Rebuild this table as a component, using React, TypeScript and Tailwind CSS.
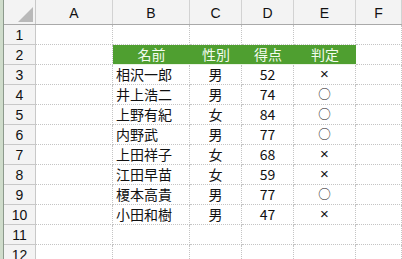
const COLS = ["A", "B", "C", "D", "E", "F"];

type Row = { n: number; cells?: [string, string, string, string]; head?: boolean };

const ROWS: Row[] = [
  { n: 1 },
  { n: 2, cells: ["名前", "性別", "得点", "判定"], head: true },
  { n: 3, cells: ["相沢一郎", "男", "52", "×"] },
  { n: 4, cells: ["井上浩二", "男", "74", "○"] },
  { n: 5, cells: ["上野有紀", "女", "84", "○"] },
  { n: 6, cells: ["内野武", "男", "77", "○"] },
  { n: 7, cells: ["上田祥子", "女", "68", "×"] },
  { n: 8, cells: ["江田早苗", "女", "59", "×"] },
  { n: 9, cells: ["榎本高貴", "男", "77", "○"] },
  { n: 10, cells: ["小田和樹", "男", "47", "×"] },
  { n: 11 },
  { n: 12 },
];

const grid = "grid grid-cols-[32px_77px_77px_52px_52px_62px_1fr]";
const cell = "h-[20px] border-r border-b border-dotted border-[#c4c4c4] flex items-center";

export default function App() {
  return (
    <div
      className="flex h-[259px] w-[402px] overflow-hidden bg-white text-[#111]"
      style={{ fontFamily: '"Noto Sans CJK JP", "Noto Sans", sans-serif' }}
    >
      {/* window edge */}
      <div className="w-[4px] shrink-0 border-r border-[#8c9a8c] bg-[#cfdccb]" />

      <div className="flex-1">
        {/* column headers */}
        <div className={`${grid} h-[25px] border-b border-[#a9a9a9] bg-[#f3f3f3] text-[14px]`}>
          <div className="relative border-r border-[#c8c8c8]">
            <svg className="absolute bottom-[2px] right-[2px]" width="15" height="15" viewBox="0 0 15 15">
              <polygon points="15,0 15,15 0,15" fill="#b9b9b9" />
            </svg>
          </div>
          {COLS.map((c) => (
            <div
              key={c}
              className="flex items-center justify-center border-r border-[#d2d2d2] pt-[3px] font-['Liberation_Sans',sans-serif] text-[14px]"
            >
              {c}
            </div>
          ))}
        </div>

        {ROWS.map((r) => (
          <div key={r.n} className={`${grid} text-[14px]`}>
            <div className="flex h-[20px] items-center justify-center border-r border-b border-[#c8c8c8] bg-[#f3f3f3] pt-[2px] font-['Liberation_Sans',sans-serif] text-[14px]">
              {r.n}
            </div>
            <div className={cell} />
            {r.head && r.cells ? (
              <>
                {r.cells.map((t) => (
                  <div
                    key={t}
                    className="flex h-[20px] items-center justify-center border-b border-[#eaf3e4] bg-[#4f9f30] text-[#f4fbef]"
                  >
                    {t}
                  </div>
                ))}
              </>
            ) : r.cells ? (
              <>
                <div className={`${cell} pl-[3px]`}>{r.cells[0]}</div>
                <div className={`${cell} justify-center`}>{r.cells[1]}</div>
                <div className={`${cell} justify-center`}>{r.cells[2]}</div>
                {r.cells[3] === "×" ? (
                  <div className={`${cell} justify-center font-['Liberation_Sans',sans-serif] text-[15px]`}>×</div>
                ) : (
                  <div className={`${cell} justify-center text-[12.5px]`}>○</div>
                )}
              </>
            ) : (
              <>
                <div className={cell} />
                <div className={cell} />
                <div className={cell} />
                <div className={cell} />
              </>
            )}
            <div className={cell} />
          </div>
        ))}
      </div>
    </div>
  );
}
